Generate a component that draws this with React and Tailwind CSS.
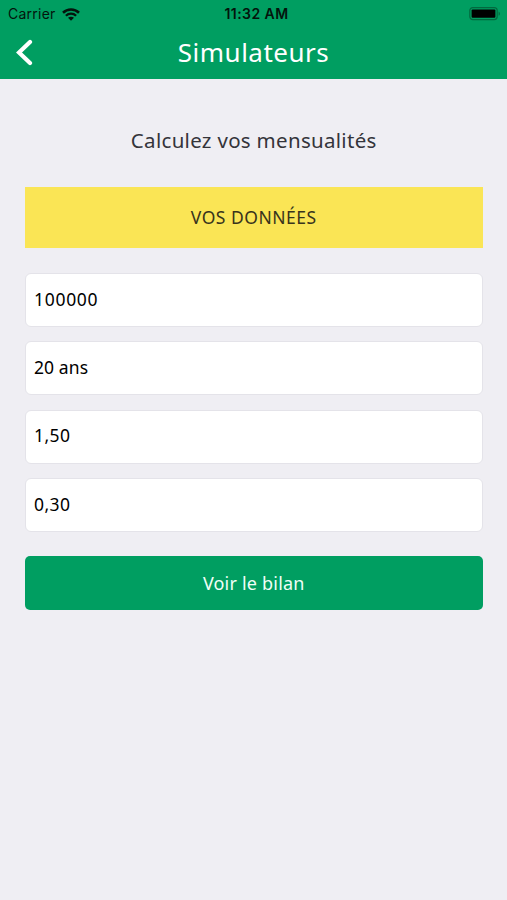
import React, { useState } from "react";

const StatusBar = () => {
  return (
    <div className="grid h-7 grid-cols-3 items-center pl-2 text-black">
      <div className="flex items-center gap-[6px]">
        <span className="font-['Inter',sans-serif] text-[14px] leading-7 tracking-[0.25px] text-[#04140c]">
          Carrier
        </span>
        <svg width="18" height="13" viewBox="0 0 18 13" fill="none">
          <path d="M1 4.7C5.4 0.5 12.6 0.5 17 4.7" stroke="#04140c" strokeWidth="2.6" />
          <path d="M3.9 7.8C6.7 5 11.3 5 14.1 7.8" stroke="#04140c" strokeWidth="2.3" />
          <path d="M9 12.8L6 9.8C7.7 8.3 10.3 8.3 12 9.8Z" fill="#04140c" />
        </svg>
      </div>
      <div className="-ml-0.5 text-center font-['Inter',sans-serif] text-[14px] font-semibold leading-7 tracking-[0.45px] text-[#04140c]">
        11:32 AM
      </div>
      <div className="flex justify-end pr-1.5">
        <svg width="32" height="14" viewBox="0 0 32 14" fill="none">
          <rect x="0.8" y="0.6" width="27.4" height="12" rx="3" stroke="#02693f" strokeWidth="1.2" />
          <rect x="2.6" y="2.4" width="23.8" height="8.4" rx="1" fill="black" />
          <path d="M29.6 4.4C31.4 5.2 31.4 8 29.6 8.8Z" fill="#02693f" />
        </svg>
      </div>
    </div>
  );
};

const App = () => {
  const [fields, setFields] = useState([
    { value: "100000", className: "tracking-[0.7px]" },
    { value: "20 ans", className: "tracking-[0.1px]" },
    { value: "1,50", className: "tracking-[0.4px]" },
    { value: "0,30", className: "tracking-[0.4px]" },
  ]);

  const handleChange = (index, value) => {
    setFields(
      fields.map((field, i) => (i === index ? { ...field, value } : field))
    );
  };

  return (
    <div className="min-h-screen bg-[#efeef3] font-['Noto_Sans',sans-serif]">
      <header className="h-[79px] bg-[#009e61]">
        <StatusBar />
        <div className="grid h-[49px] grid-cols-[48px_1fr_48px] items-center">
          <button className="pl-4" aria-label="Retour">
            <svg width="17" height="27" viewBox="0 0 17 27" fill="none">
              <path
                d="M14 3L3 13.5L14 24"
                stroke="white"
                strokeWidth="4.2"
                strokeLinecap="round"
              />
            </svg>
          </button>
          <h1 className="pb-0.5 text-center text-[26px] leading-[46px] tracking-[0.5px] text-white">
            Simulateurs
          </h1>
        </div>
      </header>

      <main className="pl-[25px] pr-[24.5px]">
        <h2 className="pt-[46px] text-center text-[20.5px] leading-[30px] tracking-[0.3px] text-[#34343a]">
          Calculez vos mensualités
        </h2>
        <div className="mt-8 h-[61px] bg-[#fae555] text-center text-[17.5px] leading-[61px] tracking-[0.5px] text-[#38341c]">
          VOS DONNÉES
        </div>
        <div className="mt-[25px] flex flex-col gap-[14.4px]">
          {fields.map((field, index) => (
            <input
              key={index}
              value={field.value}
              onChange={(e) => handleChange(index, e.target.value)}
              className={`h-[54px] w-full rounded-md border border-[#e4e3e9] bg-white px-2 pb-[3px] text-[17.5px] text-black outline-none ${field.className}`}
            />
          ))}
        </div>
        <button className="mt-6 h-[54px] w-full rounded-[5px] bg-[#009e61] text-center text-[18px] tracking-[0.2px] text-[#effff7]">
          Voir le bilan
        </button>
      </main>
    </div>
  );
};

export default App;
